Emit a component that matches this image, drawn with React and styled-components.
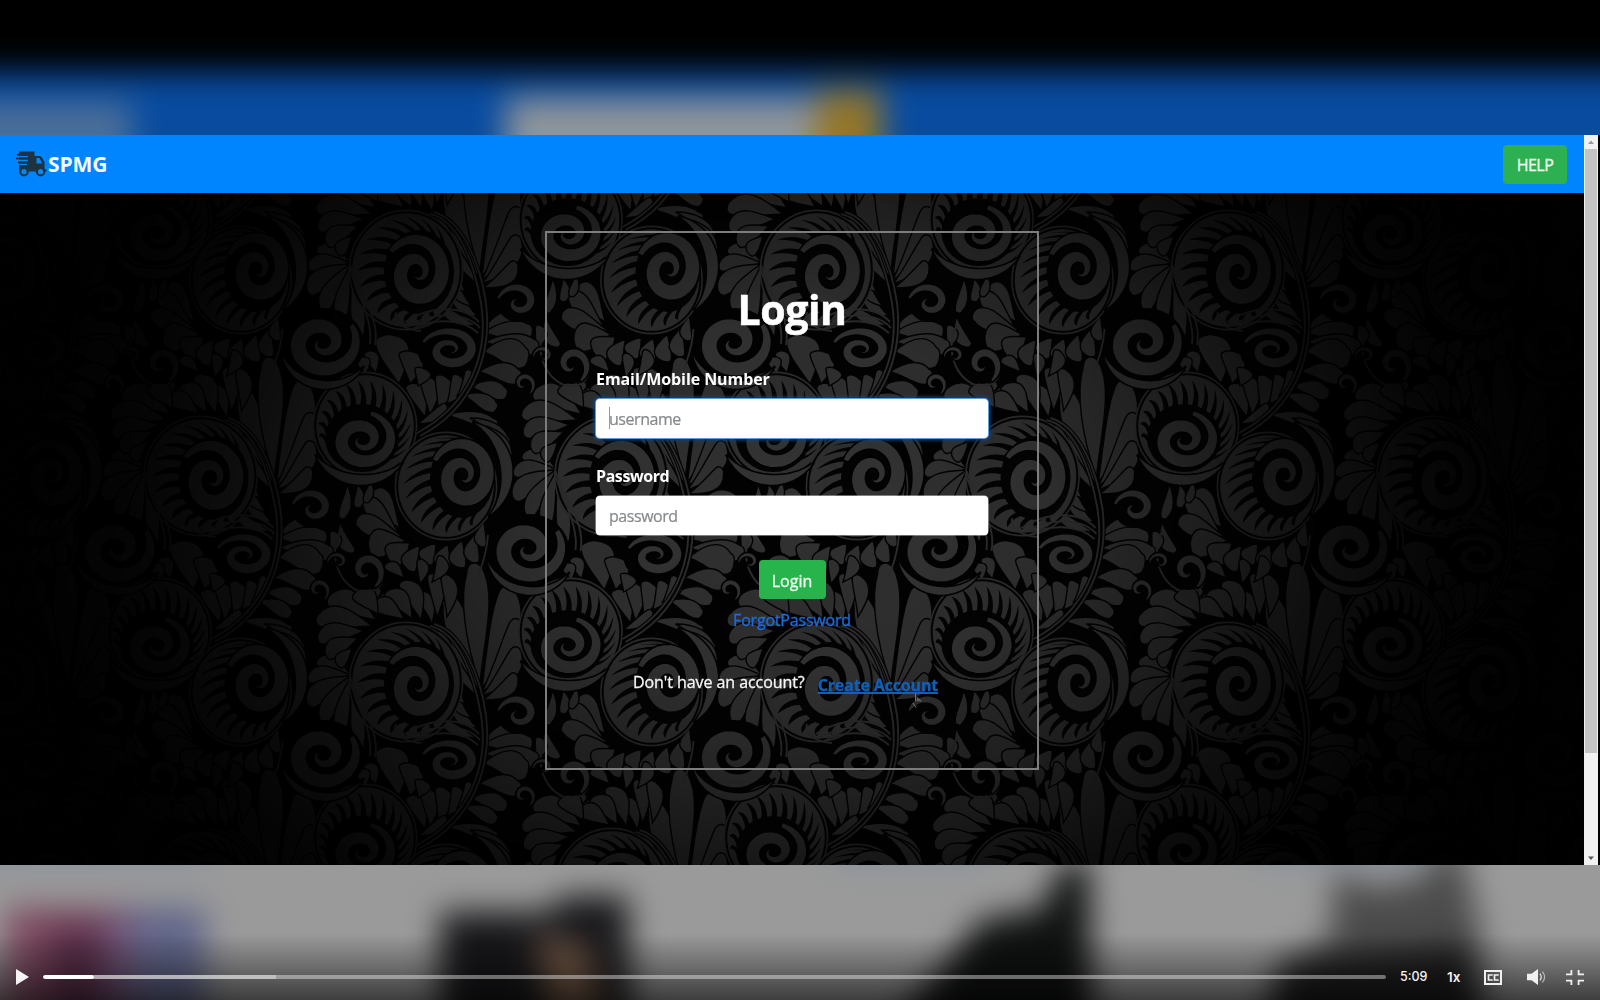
import React from "react";
import styled, { createGlobalStyle } from "styled-components";

const UI = `"Open Sans", "Noto Sans", "Liberation Sans", sans-serif`;

const GlobalStyle = createGlobalStyle`
  *, *::before, *::after { box-sizing: border-box; }
  body { margin: 0; background: #000; overflow: hidden; }
`;

const Player = styled.div`
  position: relative;
  display: flex;
  flex-direction: column;
  width: 1600px;
  height: 1000px;
  padding-top: 135px;
  overflow: hidden;
  background: #000;
  font-family: ${UI};
`;

/* ---------- blurred page behind the video ---------- */

const Backdrop = styled.div`
  position: absolute;
  inset: 0;
  overflow: hidden;
`;

const BlurredArt = styled.svg`
  display: block;
  width: 1600px;
  height: 1000px;
`;

const PageBehind = () => (
  <Backdrop>
    <BlurredArt viewBox="0 0 1600 1000" aria-hidden="true">
      <defs>
        <filter
          id="soft"
          filterUnits="userSpaceOnUse"
          x="-120"
          y="-60"
          width="1840"
          height="1180"
          colorInterpolationFilters="sRGB"
        >
          <feGaussianBlur stdDeviation="16" />
        </filter>
      </defs>
      <g filter="url(#soft)">
        <rect x="-120" y="72" width="1840" height="180" fill="#084b9f" />
        <rect x="-120" y="102" width="252" height="80" fill="#4c6e98" />
        <rect x="506" y="98" width="312" height="110" fill="#90959a" />
        <rect x="816" y="90" width="66" height="110" fill="#93762a" />
        <rect x="-120" y="400" width="1840" height="720" fill="#9a9a9a" />
        <rect x="-120" y="820" width="330" height="46" fill="#8a929c" />
        <rect x="830" y="820" width="160" height="46" fill="#8a929c" />
        <rect x="1250" y="820" width="180" height="46" fill="#8a929c" />
        <rect x="6" y="908" width="102" height="200" fill="#7d4a60" />
        <rect x="50" y="925" width="54" height="180" fill="#582e48" />
        <rect x="104" y="908" width="34" height="200" fill="#715578" />
        <rect x="136" y="908" width="70" height="200" fill="#61668a" />
        <path d="M440 912H550L562 896H628L632 1100H440Z" fill="#17171a" />
        <path d="M536 935 592 950 618 1100 560 1100Z" fill="#755a48" />
        <path d="M1088 856 1056 872 1044 908 980 920 950 960 905 1012 880 1100 1096 1100Z" fill="#101111" />
        <path d="M1335 870 1372 888 1425 878 1436 850 1462 850 1482 940 1488 1100 1260 1100 1276 966 1330 940Z" fill="#4c4c4c" />
        <path d="M1282 962 1470 945 1490 1100 1240 1100Z" fill="#1d1d1e" />
      </g>
    </BlurredArt>
  </Backdrop>
);

/* ---------- floral wallpaper ---------- */

const n1 = (v) => Math.round(v * 10) / 10;
const toPath = (pts) => "M" + pts.map(([x, y]) => `${n1(x)} ${n1(y)}`).join("L") + "Z";

const leaf = (x0, y0, x1, y1, w, bend = 0) => {
  const dx = x1 - x0;
  const dy = y1 - y0;
  const len = Math.hypot(dx, dy);
  const nx = -dy / len;
  const ny = dx / len;
  const at = (t, s) => `${n1(x0 + dx * t + nx * s)} ${n1(y0 + dy * t + ny * s)}`;
  return `M${at(0, 0)}C${at(0.35, w * 0.5 + bend)} ${at(0.75, w * 1.5 + bend)} ${at(
    0.99,
    w * 0.45
  )}C${at(1.06, w * 0.1)} ${at(1.05, -w * 0.5)} ${at(0.94, -w * 0.55)}C${at(
    0.75,
    -w * 0.9 + bend * 0.6
  )} ${at(0.4, -w * 0.7 + bend)} ${at(0, 0)}Z`;
};

const strip = (centre, half, steps = 46) => {
  const left = [];
  const right = [];
  for (let i = 0; i <= steps; i += 1) {
    const t = i / steps;
    const { x, y, a } = centre(t);
    const h = half(t);
    left.push([x + Math.cos(a) * h, y + Math.sin(a) * h]);
    right.unshift([x - Math.cos(a) * h, y - Math.sin(a) * h]);
  }
  return toPath([...left, ...right]);
};

const rad = (deg) => (deg * Math.PI) / 180;

const spiral = (cx, cy, rx, ry, from, turns, dir = 1) =>
  strip(
    (t) => {
      const a = rad(from) + dir * t * turns * 2 * Math.PI;
      const k = Math.pow(1 - t, 1.15) * 0.8 + 0.07;
      return { x: cx + Math.cos(a) * rx * k, y: cy + Math.sin(a) * ry * k, a };
    },
    (t) => Math.min(rx, ry) * 0.29 * Math.pow(Math.sin(Math.PI * Math.min(1, t * 0.9 + 0.05)), 0.75) * (1.15 - t * 0.95),
    70
  );

const crescent = (cx, cy, rx, ry, from, to, w) =>
  strip(
    (t) => {
      const a = rad(from + (to - from) * t);
      return { x: cx + Math.cos(a) * rx, y: cy + Math.sin(a) * ry, a };
    },
    (t) => w * Math.sin(Math.PI * t) + 0.4,
    30
  );

/* Hooked cuts running from the inner edge of a fern ring towards its rim. */
const notches = (ring, eye, from, to, count) =>
  Array.from({ length: count }, (_, i) => {
    const a = rad(from + ((to - from) * i) / (count - 1));
    const p = (k, turn) => {
      const t = a + rad(turn);
      const ix = eye[0] + Math.cos(t) * eye[2];
      const iy = eye[1] + Math.sin(t) * eye[3];
      const ox = ring[0] + Math.cos(t) * ring[2];
      const oy = ring[1] + Math.sin(t) * ring[3];
      return [ix + (ox - ix) * k, iy + (oy - iy) * k];
    };
    const s = (pt) => `${n1(pt[0])} ${n1(pt[1])}`;
    return `M${s(p(-0.12, 12))}C${s(p(0.3, 12))} ${s(p(0.6, 7))} ${s(p(0.86, -3))}C${s(p(0.5, 2))} ${s(
      p(0.25, 5)
    )} ${s(p(-0.12, 2))}Z`;
  });

const FOLIAGE = [
  [482, 288, 439, 222, 9, -5],
  [481, 280, 449, 186, 15, -5],
  [480, 272, 475, 155, 16, -3],
  [482, 276, 509, 178, 17, 6],
  [482, 280, 518, 210, 13, 8],
  [482, 284, 518, 238, 11, 7],
  [483, 288, 516, 264, 9, 6],
  [350, 262, 318, 249, 9, 3],
  [350, 263, 309, 266, 10, 3],
  [350, 264, 309, 291, 12, 4],
  [350, 264, 323, 309, 10, 3],
  [350, 266, 341, 320, 9, 2],
  [352, 266, 360, 334, 9, -2],
  [483, 330, 516, 316, 10, -3],
  [483, 333, 531, 331, 13, -3],
  [484, 342, 537, 347, 13, -4],
  [483, 352, 527, 358, 18, -8],
  [479, 372, 520, 377, 13, -6],
  [470, 387, 506, 394, 11, -5],
  [463, 395, 496, 408, 10, -4],
  [446, 415, 496, 424, 9, -4],
  [470, 418, 508, 442, 8, -6],
  [486, 426, 510, 455, 7, -5],
  [425, 417, 410, 385, 10, 4],
  [430, 415, 425, 377, 10, 5],
  [438, 411, 441, 376, 10, 6],
  [447, 404, 458, 376, 10, 6],
  [457, 396, 470, 371, 8, 6],
  [418, 424, 446, 406, 7, 3],
  [399, 384, 384, 337, 18, 6],
  [410, 384, 406, 352, 13, 7],
  [418, 386, 420, 368, 9, 5],
  [376, 373, 368, 352, 8, 2],
  [366, 374, 360, 358, 8, 2],
  [400, 528, 377, 490, 12, -3],
  [398, 532, 366, 500, 12, -3],
  [402, 536, 358, 520, 13, -3],
  [405, 540, 370, 548, 17, 2],
  [410, 543, 392, 562, 14, 4],
  [420, 545, 410, 570, 10, 5],
  [436, 543, 427, 563, 10, 4],
  [448, 544, 444, 568, 10, 4],
  [462, 540, 460, 567, 10, 4],
  [476, 533, 474, 562, 9, 4],
  [484, 522, 482, 546, 7, 3],
  [432, 212, 419, 180, 8, 5],
  [421, 208, 404, 170, 11, 5],
  [412, 207, 388, 180, 11, 5],
  [404, 207, 374, 192, 11, 4],
  [437, 205, 432, 163, 9, 4],
  [447, 205, 446, 164, 9, 5],
  [420, 172, 421, 148, 7, 3],
  [432, 170, 442, 145, 8, 5],
  [404, 166, 386, 153, 7, 3],
  [376, 208, 330, 186, 14, 5],
  [372, 214, 318, 207, 13, 5],
  [364, 219, 319, 226, 12, 3],
  [358, 226, 327, 243, 11, 3],
  [352, 236, 339, 254, 8, 2],
  [378, 202, 356, 181, 12, 5],
  [347, 484, 342, 518, 7, -4],
  [357, 484, 358, 507, 7, -4],
  [370, 480, 366, 502, 6, -3],
  [340, 522, 352, 552, 7, 5],
  [330, 556, 334, 532, 7, 4],
  [345, 590, 380, 592, 8, 5],
  [360, 606, 398, 590, 7, 5],
  [478, 316, 454, 296, 8, -5],
  [472, 306, 453, 284, 7, -5],
  [466, 292, 453, 270, 7, -5],
  [476, 325, 444, 312, 7, -3],
  [390, 322, 412, 308, 5, 4],
].map((args) => leaf(...args));

const STEMS = [
  "M430 214C458 220 474 262 481 303C489 354 470 405 417 433",
  "M434 212C462 220 480 262 486 303C492 354 474 408 420 436",
  "M413 329C432 318 462 318 478 333M409 326C432 311 466 312 480 328M405 322C430 305 464 305 479 322",
  "M396 312C392 323 407 330 421 331",
  "M375 345C380 318 362 300 350 265",
  "M370 344C373 322 360 298 349 268",
  "M488 535C486 560 480 568 478 577",
  "M340 532C326 560 344 592 366 592C382 592 388 576 378 566",
];

const RINGS = [
  { ring: [406, 270, 53, 56], eye: [419, 272, 35, 42], cuts: [60, 305, 15] },
  { ring: [365, 426, 48, 50], eye: [362, 438, 37, 34], cuts: [172, 388, 15] },
  { ring: [446, 486, 47, 50], eye: [462, 478, 32, 40], cuts: [60, 290, 14] },
];

const SCROLLS = [
  spiral(417, 273, 37, 42, 215, 1.85),
  spiral(362, 440, 37, 32, -75, 1.95),
  spiral(463, 476, 36, 41, 205, 1.85),
  spiral(322, 343, 41, 37, -35, 1.8),
  spiral(450, 350, 33, 24, -160, 1.8),
  spiral(518, 302, 23, 20, 190, 1.3),
  spiral(366, 571, 20, 21, 60, 1.2, -1),
  spiral(318, 590, 13, 13, 60, 1.2, -1),
  spiral(338, 562, 12, 11, 170, 1.1),
  crescent(362, 427, 55, 53, 148, 42, 5.2),
  crescent(326, 342, 46, 43, 165, 35, 4.2),
  crescent(455, 474, 52, 55, -70, 50, 6),
];

const CELLS = [];
for (let row = -3; row <= 4; row += 1) {
  for (let col = -3; col <= 7; col += 1) {
    if ((row + col) % 2 === 0) CELLS.push([col * 205.5, row * 206]);
  }
}

const WallpaperSvg = styled.svg`
  position: absolute;
  inset: 0;
  width: 1584px;
  height: 672px;
`;

const Wallpaper = () => (
  <WallpaperSvg viewBox="0 193 1584 672" aria-hidden="true">
    <defs>
      <g id="foliage" fill="#313131" stroke="#040404" strokeWidth="1.4">
        {FOLIAGE.map((d, i) => (
          <path key={i} d={d} />
        ))}
      </g>
      <g id="scrolls">
        <ellipse cx="324" cy="345" rx="40" ry="37" fill="#030303" />
        <ellipse cx="449" cy="352" rx="31" ry="23" fill="#030303" />
        <ellipse cx="518" cy="304" rx="20" ry="18" fill="#030303" />
        <ellipse cx="366" cy="571" rx="18" ry="19" fill="#030303" />
        {RINGS.map(({ ring, eye, cuts }, i) => (
          <g key={i}>
            <ellipse
              cx={ring[0]}
              cy={ring[1]}
              rx={ring[2] + 3.6}
              ry={ring[3] + 3.6}
              fill="#040404"
              stroke="#2e2e2e"
              strokeWidth="1.6"
            />
            <ellipse cx={ring[0]} cy={ring[1]} rx={ring[2] + 0.8} ry={ring[3] + 0.8} fill="#303030" />
            <ellipse cx={eye[0]} cy={eye[1]} rx={eye[2]} ry={eye[3]} fill="#040404" />
            <g fill="#040404">
              {notches(ring, eye, ...cuts).map((d, k) => (
                <path key={k} d={d} />
              ))}
            </g>
          </g>
        ))}
        <g fill="none" stroke="#030303" strokeWidth="4">
          {STEMS.slice(0, 2).map((d, i) => (
            <path key={i} d={d} />
          ))}
        </g>
        <g fill="none" stroke="#2e2e2e" strokeWidth="1.9">
          {STEMS.map((d, i) => (
            <path key={i} d={d} />
          ))}
        </g>
        <g fill="#343434" stroke="#030303" strokeWidth="1.6">
          {SCROLLS.map((d, i) => (
            <path key={i} d={d} />
          ))}
        </g>
      </g>
      <radialGradient
        id="vignette"
        gradientUnits="userSpaceOnUse"
        cx="0"
        cy="0"
        r="1"
        gradientTransform="translate(792 505) scale(790 600)"
      >
        <stop offset="0" stopColor="#000" stopOpacity="0" />
        <stop offset="0.3" stopColor="#000" stopOpacity="0.08" />
        <stop offset="0.5" stopColor="#000" stopOpacity="0.36" />
        <stop offset="0.68" stopColor="#000" stopOpacity="0.7" />
        <stop offset="0.84" stopColor="#000" stopOpacity="0.9" />
        <stop offset="1" stopColor="#000" stopOpacity="0.98" />
      </radialGradient>
      <filter id="cloth" x="0" y="0" width="100%" height="100%" colorInterpolationFilters="sRGB">
        <feGaussianBlur stdDeviation="0.65" />
      </filter>
    </defs>
    <rect y="193" width="1584" height="672" fill="#030303" />
    <g filter="url(#cloth)">
      {CELLS.map(([x, y], i) => (
        <use key={i} href="#foliage" x={x} y={y} />
      ))}
      {CELLS.map(([x, y], i) => (
        <use key={i} href="#scrolls" x={x} y={y} />
      ))}
    </g>
    <rect y="193" width="1584" height="672" fill="url(#vignette)" />
  </WallpaperSvg>
);

/* ---------- video frame ---------- */

const Frame = styled.div`
  position: relative;
  display: flex;
  flex: none;
  height: 730px;
  padding-right: 2px;
  background: #000;
`;

const Site = styled.div`
  display: flex;
  flex: 1;
  flex-direction: column;
`;

const NavBar = styled.header`
  display: flex;
  align-items: center;
  justify-content: space-between;
  height: 58px;
  padding: 0 17px 0 16px;
  background: #0085ff;
`;

const Brand = styled.div`
  display: flex;
  align-items: center;
  color: #f4fbff;
  font-size: 21px;
  font-weight: 700;
  line-height: 30px;
  letter-spacing: -0.1px;
`;

const TruckSvg = styled.svg`
  width: 31px;
  height: 27px;
  margin-right: 1px;
  margin-top: -2px;
`;

const Truck = () => (
  <TruckSvg viewBox="0 0 31 27" fill="none">
    <path d="M4 1.5H18.5V6H23.5Q25 6 26 7.5L28.6 12.5V19.5H30.5V21.5H3V1.5Z" fill="#1b3440" />
    <path d="M1 4.8H15M0 8.6H13M2 12.4H14" stroke="#1b3440" strokeWidth="2" />
    <path d="M0 6.7H12M0 10.5H12M0 14.4H11" stroke="#0a86f0" strokeWidth="1.3" />
    <path d="M20.5 8H23.4L26.4 13.4H20.5Z" fill="#0a86f0" />
    <circle cx="8" cy="21.7" r="3.7" fill="#0a86f0" stroke="#1b3440" strokeWidth="2.2" />
    <circle cx="24.6" cy="21.7" r="3.7" fill="#0a86f0" stroke="#1b3440" strokeWidth="2.2" />
  </TruckSvg>
);

const GreenButton = styled.button`
  display: block;
  width: ${(p) => p.$width}px;
  height: 39px;
  margin: 0;
  padding: ${(p) => p.$drop || 1}px 0 0;
  border: 0;
  border-radius: 4px;
  background: ${(p) => p.$tone || "#28b44c"};
  color: #f2fff2;
  font: 400 16px/38px ${UI};
  letter-spacing: ${(p) => p.$tracking || "0"};
  text-align: center;
  -webkit-text-stroke: 0.3px currentColor;
`;

const Body = styled.main`
  position: relative;
  display: flex;
  flex: 1;
  justify-content: center;
  align-items: flex-start;
  padding-top: 38px;
  overflow: hidden;
`;

const Card = styled.form`
  position: relative;
  display: flex;
  flex-direction: column;
  width: 494px;
  height: 539px;
  padding: 45px 49px 0;
  border: 2px solid #7d7d7d;
`;

const Title = styled.h1`
  margin: 1px 0;
  color: #fff;
  font-size: 41px;
  font-weight: 700;
  line-height: 60px;
  letter-spacing: -0.4px;
  text-align: center;
  -webkit-text-stroke: 0.5px currentColor;
`;

const Label = styled.label`
  display: block;
  margin-top: ${(p) => p.$gap}px;
  color: #fff;
  font-size: 16px;
  font-weight: 700;
  line-height: 24px;
  letter-spacing: ${(p) => p.$tracking}px;
`;

const Field = styled.div`
  position: relative;
  display: flex;
  height: 39px;
  margin-top: ${(p) => p.$gap}px;
  border-radius: 4px;
  background: #fff;
  box-shadow: ${(p) => (p.$focused ? "0 0 0 1px #5f9bd6, 0 0 3px 3px rgba(12, 70, 130, 0.75)" : "0 0 0 0.5px #ccc")};
`;

const Input = styled.input`
  width: 100%;
  padding: 1px 13px 0;
  border: 0;
  outline: 0;
  background: transparent;
  font: 400 16px/24px ${UI};
  letter-spacing: -0.45px;
  &::placeholder { color: #85898d; opacity: 1; -webkit-text-stroke: 0.2px currentColor; }
`;

const Caret = styled.i`
  position: absolute;
  left: 13px;
  top: 8px;
  width: 1px;
  height: 22px;
  background: #999;
`;

const Actions = styled.div`
  display: flex;
  flex-direction: column;
  align-items: center;
  margin-top: 25px;
`;

const Forgot = styled.a`
  margin-top: 9px;
  color: #1b6ce2;
  font-size: 16px;
  line-height: 24px;
  letter-spacing: -0.2px;
  -webkit-text-stroke: 0.3px currentColor;
`;

const SignUp = styled.div`
  display: flex;
  align-items: baseline;
  margin: 38px 0 0 37px;
  color: #f6f6f6;
  font-size: 16px;
  line-height: 24px;
  letter-spacing: -0.07px;
  white-space: nowrap;
  -webkit-text-stroke: 0.3px currentColor;
`;

const CreateLink = styled.a`
  position: relative;
  top: 3px;
  margin-left: 13px;
  color: #0e60ba;
  font-weight: 700;
  letter-spacing: -0.15px;
  text-decoration: underline;
  text-decoration-thickness: 2px;
  text-underline-offset: 1px;
`;

const Pointer = styled.svg`
  position: absolute;
  left: 364px;
  top: 459px;
  width: 14px;
  height: 18px;
`;

const ScrollRail = styled.div`
  display: flex;
  flex-direction: column;
  align-items: center;
  width: 14px;
  background: #f1f1f1;
`;

const RailArrow = styled.svg`
  flex: none;
  width: 14px;
  height: 14px;
  margin-top: ${(p) => (p.$end ? "auto" : 0)};
`;

const Thumb = styled.div`
  width: 12px;
  height: 604px;
  background: #c4c4c4;
`;

/* ---------- player controls ---------- */

const Controls = styled.div`
  position: relative;
  display: flex;
  flex: 1;
  align-items: flex-end;
`;

const ControlBar = styled.div`
  display: flex;
  align-items: center;
  width: 1600px;
  height: 66px;
  padding: 20px 16px 0;
  background: linear-gradient(rgba(0, 0, 0, 0), rgba(0, 0, 0, 0.6));
`;

const Icon = styled.svg`
  display: block;
  flex: none;
  width: ${(p) => p.$w}px;
  height: ${(p) => p.$h}px;
  margin-left: ${(p) => p.$gap || 0}px;
`;

const Track = styled.div`
  display: flex;
  flex: none;
  width: 1343px;
  height: 4px;
  margin-left: 14px;
  border-radius: 2px;
  overflow: hidden;
  background: rgba(255, 255, 255, 0.4);
`;

const Segment = styled.div`
  width: ${(p) => p.$w}px;
  border-radius: ${(p) => (p.$solid ? "2px" : 0)};
  background: ${(p) => (p.$solid ? "#fff" : "rgba(255, 255, 255, 0.35)")};
`;

const Readout = styled.span`
  flex: none;
  width: ${(p) => p.$w}px;
  margin-left: ${(p) => p.$gap}px;
  color: #f2f2f2;
  font: ${(p) => p.$weight} ${(p) => p.$size}px/16px Inter, "Liberation Sans", sans-serif;
  white-space: nowrap;
`;

export default function App() {
  return (
    <Player>
      <GlobalStyle />
      <PageBehind />
      <Frame>
        <Site>
          <NavBar>
            <Brand>
              <Truck />
              SPMG
            </Brand>
            <GreenButton type="button" $width={64} $tone="#2db052" $tracking="-0.5px">
              HELP
            </GreenButton>
          </NavBar>
          <Body>
            <Wallpaper />
            <Card>
              <Title>Login</Title>
              <Label $gap={27} $tracking={-0.08}>
                Email/Mobile Number
              </Label>
              <Field $gap={8} $focused>
                <Input type="text" placeholder="username" />
                <Caret />
              </Field>
              <Label $gap={26} $tracking={-0.42}>
                Password
              </Label>
              <Field $gap={8}>
                <Input type="password" placeholder="password" />
              </Field>
              <Actions>
                <GreenButton type="button" $width={67} $drop={2}>
                  Login
                </GreenButton>
                <Forgot>ForgotPassword</Forgot>
              </Actions>
              <SignUp>
                Don't have an account?
                <CreateLink>Create Account</CreateLink>
              </SignUp>
              <Pointer viewBox="0 0 14 18" fill="none">
                <path d="M4.5 9V1.5M5.5 8 10.5 9M2 11 5 15.5" stroke="#777" strokeWidth="1" />
                <path d="M5.5 4.5 10.5 8.5 6 9.5Z" fill="#606060" />
              </Pointer>
            </Card>
          </Body>
        </Site>
        <ScrollRail>
          <RailArrow viewBox="0 0 14 14">
            <path d="M4 9 7 5.5 10 9Z" fill="#999" />
          </RailArrow>
          <Thumb />
          <RailArrow viewBox="0 0 14 14" $end>
            <path d="M4 5.5 7 9 10 5.5Z" fill="#555" />
          </RailArrow>
        </ScrollRail>
      </Frame>
      <Controls>
        <ControlBar>
          <Icon $w={13} $h={16} viewBox="0 0 13 16">
            <path d="M0 0 13 8 0 16Z" fill="#f5f5f5" />
          </Icon>
          <Track>
            <Segment $w={51} $solid />
            <Segment $w={182} />
          </Track>
          <Readout $w={32} $gap={14} $weight={500} $size={12.5}>
            5:09
          </Readout>
          <Readout $w={24} $gap={15} $weight={600} $size={13.5}>
            1x
          </Readout>
          <Icon $w={18} $h={15} $gap={13} viewBox="0 0 18 15" fill="none" stroke="#f0f0f0">
            <rect x="1" y="1" width="16" height="13" strokeWidth="2" />
            <path d="M8 5.6V5H4.5V10H8V9.4M14 5.6V5H10.5V10H14V9.4" strokeWidth="1.7" />
          </Icon>
          <Icon $w={19} $h={16} $gap={25} viewBox="0 0 19 16" fill="none">
            <path d="M0 4.7H4.5L11 0V16L4.5 11.3H0Z" fill="#f0f0f0" />
            <path d="M13 4.6Q15.4 8 13 11.4" stroke="#ddd" strokeWidth="1.3" />
            <path d="M15.4 2.6Q19.8 8 15.4 13.4" stroke="#bbb" strokeWidth="1.2" />
          </Icon>
          <Icon $w={18} $h={15} $gap={20} viewBox="0 0 18 15" fill="none" stroke="#f0f0f0" strokeWidth="1.8">
            <path d="M0 4.4H5.4V0M18 4.4H12.6V0M0 10.6H5.4V15M18 10.6H12.6V15" />
          </Icon>
        </ControlBar>
      </Controls>
    </Player>
  );
}
